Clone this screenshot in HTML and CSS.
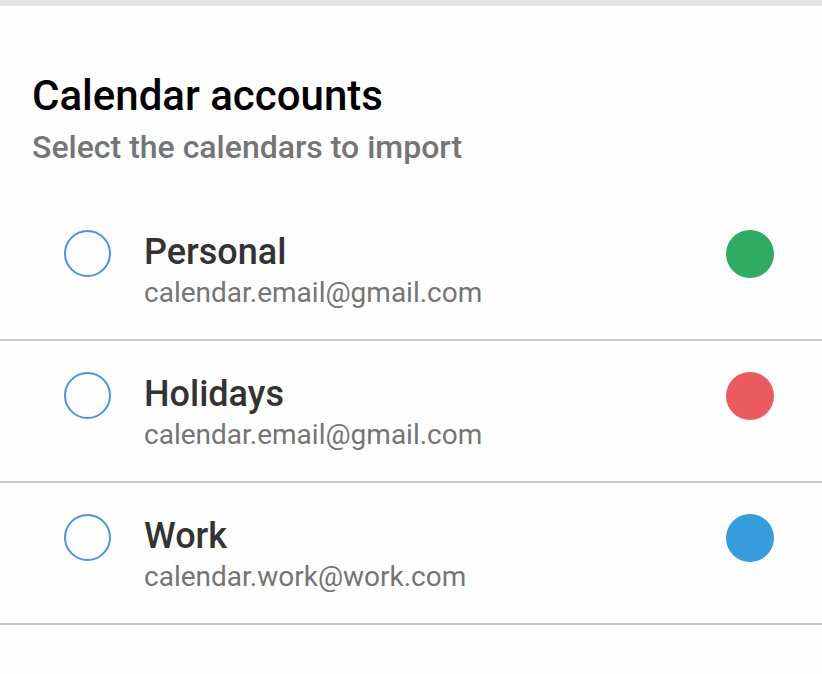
FILE: index.html
```html
<!DOCTYPE html>
<html>
<head>
<meta charset="utf-8">
<link rel="stylesheet" href="styles.css">
</head>
<body>
<div class="topbar"></div>
<header class="head">
  <h1 class="title">Calendar accounts</h1>
  <p class="subtitle">Select the calendars to import</p>
</header>
<ul class="list">
  <li class="row">
    <span class="radio"></span>
    <div class="info">
      <div class="name">Personal</div>
      <div class="email">calendar.email@gmail.com</div>
    </div>
    <span class="dot green"></span>
  </li>
  <li class="row">
    <span class="radio"></span>
    <div class="info">
      <div class="name">Holidays</div>
      <div class="email">calendar.email@gmail.com</div>
    </div>
    <span class="dot red"></span>
  </li>
  <li class="row">
    <span class="radio"></span>
    <div class="info">
      <div class="name">Work</div>
      <div class="email">calendar.work@work.com</div>
    </div>
    <span class="dot blue"></span>
  </li>
</ul>
</body>
</html>
```
FILE: styles.css
```css
html, body {
  margin: 0;
  padding: 0;
  background: #fefefe;
  font-family: Roboto, "Liberation Sans", sans-serif;
}
.topbar {
  height: 6px;
  background: #e3e3e3;
}
.head {
  padding: 65px 0 0 32px;
  height: 193px;
  box-sizing: border-box;
}
.title {
  margin: 0;
  font-size: 42px;
  line-height: 50px;
  font-weight: 500;
  color: #000;
}
.subtitle {
  margin: 7px 0 0 0;
  font-size: 32px;
  line-height: 38px;
  font-weight: 500;
  color: #757575;
}
.list {
  list-style: none;
  margin: 0;
  padding: 0;
}
.row {
  display: flex;
  align-items: flex-start;
  height: 142px;
  box-sizing: border-box;
  border-bottom: 2px solid #c8c8c8;
  padding: 31px 48px 0 64px;
}
.radio {
  width: 47px;
  height: 47px;
  box-sizing: border-box;
  border: 2px solid #4a90f5;
  border-radius: 50%;
  flex: none;
}
.info {
  flex: 1;
  margin-left: 33px;
}
.name {
  font-size: 36px;
  line-height: 44px;
  font-weight: 500;
  color: #333333;
}
.email {
  margin-top: 2px;
  font-size: 28px;
  line-height: 34px;
  color: #757575;
}
.dot {
  width: 48px;
  height: 48px;
  border-radius: 50%;
  flex: none;
}
.green { background: #2eac62; }
.red { background: #eb5a5e; }
.blue { background: #379ede; }
```
